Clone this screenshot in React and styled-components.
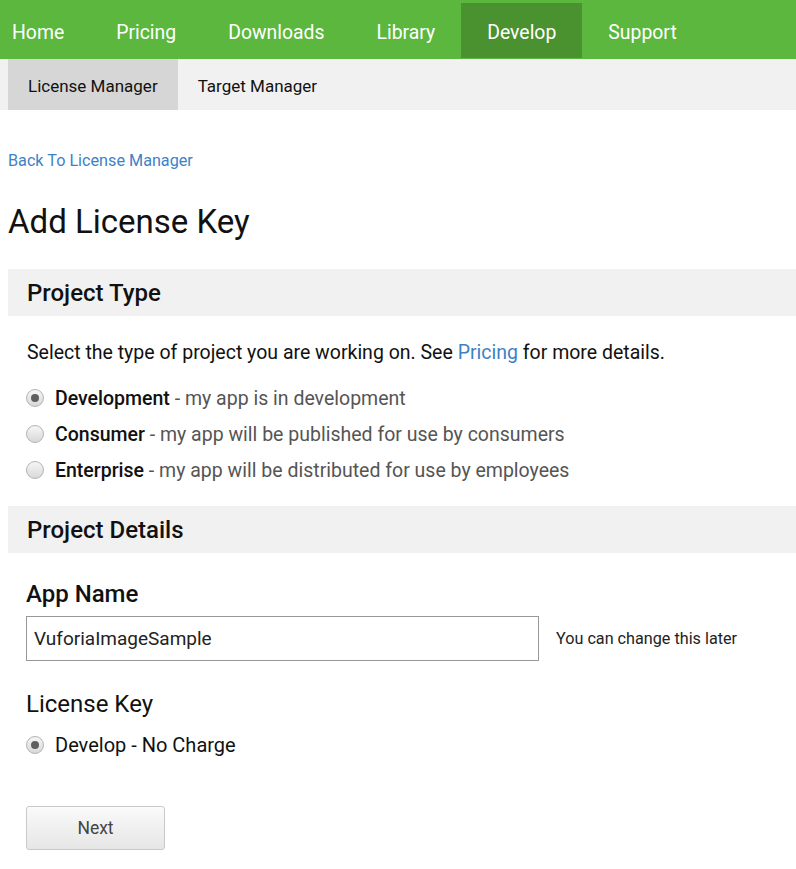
import React, { useState } from 'react'
import styled, { createGlobalStyle } from 'styled-components'

const GlobalStyle = createGlobalStyle`
  body {
    margin: 0;
    font-family: Roboto, "Noto Sans", Arial, sans-serif;
    color: #111;
    background: #fff;
  }
`;

const TopNav = styled.nav`
  display: flex;
  height: 59px;
  background: #5bb73d;
  padding-left: 12px;
`;

const NavItem = styled.a`
  display: flex;
  align-items: center;
  box-sizing: border-box;
  height: 55px;
  margin-top: 3px;
  padding: 3px 26px 0;
  margin-left: ${(p) => (p.first ? '-26px' : '0')};
  font-size: 19.4px;
  color: #fff;
  text-decoration: none;
  background: ${(p) => (p.active ? '#4a912f' : 'transparent')};
`;

const SubNav = styled.div`
  display: flex;
  height: 51px;
  background: #f1f1f1;
  padding-left: 8px;
`;

const SubItem = styled.a`
  display: flex;
  align-items: center;
  padding: 3px 20px 0;
  font-size: 17px;
  color: #111;
  text-decoration: none;
  background: ${(p) => (p.active ? '#d6d6d6' : 'transparent')};
`;

const Main = styled.main`
  padding: 41px 0 0 8px;
`;

const BackLink = styled.a`
  display: block;
  font-size: 16.2px;
  line-height: 20px;
  color: #3d82c6;
  text-decoration: none;
`;

const Title = styled.h1`
  margin: 31px 0 27px;
  font-size: 33px;
  font-weight: 400;
  line-height: 40px;
`;

const SectionBar = styled.h2`
  margin: 0;
  height: 47px;
  display: flex;
  align-items: center;
  padding-left: 19px;
  background: #f1f1f1;
  font-size: 24px;
  font-weight: 500;
`;

const SectionBody = styled.div`
  padding: ${(p) => p.pad || '0'};
  padding-left: 18px;
`;

const Intro = styled.p`
  margin: 0 0 14px 1px;
  font-size: 19.5px;
  line-height: 26px;
`;

const Link = styled.a`
  color: #3d82c6;
  text-decoration: none;
`;

const RadioRow = styled.label`
  display: flex;
  align-items: center;
  height: 36px;
  font-size: ${(p) => p.size || '19.5px'};
  cursor: pointer;
`;

const RadioDot = styled.span`
  width: 18px;
  height: 18px;
  border-radius: 50%;
  box-sizing: border-box;
  border: 1px solid #b3b3b3;
  background: linear-gradient(#f6f6f6, #d8d8d8);
  margin-right: 11px;
  display: flex;
  align-items: center;
  justify-content: center;
  flex-shrink: 0;
  &::after {
    content: '';
    width: 8px;
    height: 8px;
    border-radius: 50%;
    background: ${(p) => (p.checked ? '#5e5e5e' : 'transparent')};
  }
`;

const RadioName = styled.strong`
  font-weight: 500;
  color: #111;
`;

const RadioNote = styled.span`
  color: #555;
`;

const FieldLabel = styled.div`
  font-size: 24px;
  font-weight: ${(p) => p.weight || 500};
  line-height: 28px;
  margin: ${(p) => p.margin || '0'};
`;

const FieldRow = styled.div`
  display: flex;
  align-items: center;
  gap: 17px;
`;

const TextInput = styled.input`
  width: 513px;
  height: 45px;
  box-sizing: border-box;
  border: 1px solid #999;
  padding: 0 7px;
  font-family: Roboto, Arial, sans-serif;
  font-size: 19px;
  color: #222;
  outline: none;
`;

const Hint = styled.span`
  font-size: 16.2px;
  color: #222;
`;

const NextButton = styled.button`
  margin-top: 43px;
  width: 139px;
  height: 44px;
  border: 1px solid #c9c9c9;
  border-radius: 3px;
  background: linear-gradient(#fafafa, #e6e6e6);
  font-family: Roboto, Arial, sans-serif;
  font-size: 17.5px;
  color: #444;
  cursor: pointer;
`;

const projectTypes = [
  { id: 'dev', name: 'Development', note: 'my app is in development' },
  { id: 'consumer', name: 'Consumer', note: 'my app will be published for use by consumers' },
  { id: 'enterprise', name: 'Enterprise', note: 'my app will be distributed for use by employees' },
]

const navItems = ['Home', 'Pricing', 'Downloads', 'Library', 'Develop', 'Support']

const App = () => {
  const [type, setType] = useState('dev')
  const [appName, setAppName] = useState('VuforiaImageSample')

  return (
    <>
      <GlobalStyle />
      <TopNav>
        {navItems.map((item, i) => (
          <NavItem key={item} first={i === 0 ? 1 : 0} active={item === 'Develop' ? 1 : 0} href="#">
            {item}
          </NavItem>
        ))}
      </TopNav>
      <SubNav>
        <SubItem active={1} href="#">License Manager</SubItem>
        <SubItem href="#">Target Manager</SubItem>
      </SubNav>

      <Main>
        <BackLink href="#">Back To License Manager</BackLink>
        <Title>Add License Key</Title>

        <SectionBar>Project Type</SectionBar>
        <SectionBody pad="24px 0 18px">
          <Intro>
            Select the type of project you are working on. See <Link href="#">Pricing</Link> for more details.
          </Intro>
          {projectTypes.map((t) => (
            <RadioRow key={t.id} onClick={() => setType(t.id)}>
              <RadioDot checked={type === t.id ? 1 : 0} />
              <span>
                <RadioName>{t.name}</RadioName>
                <RadioNote> - {t.note}</RadioNote>
              </span>
            </RadioRow>
          ))}
        </SectionBody>

        <SectionBar>Project Details</SectionBar>
        <SectionBody pad="27px 0 0">
          <FieldLabel margin="0 0 8px">App Name</FieldLabel>
          <FieldRow>
            <TextInput value={appName} onChange={(e) => setAppName(e.target.value)} />
            <Hint>You can change this later</Hint>
          </FieldRow>
          <FieldLabel weight={400} margin="29px 0 9px">License Key</FieldLabel>
          <RadioRow size="20px">
            <RadioDot checked={1} />
            <span>Develop - No Charge</span>
          </RadioRow>
          <NextButton>Next</NextButton>
        </SectionBody>
      </Main>
    </>
  )
}

export default App
